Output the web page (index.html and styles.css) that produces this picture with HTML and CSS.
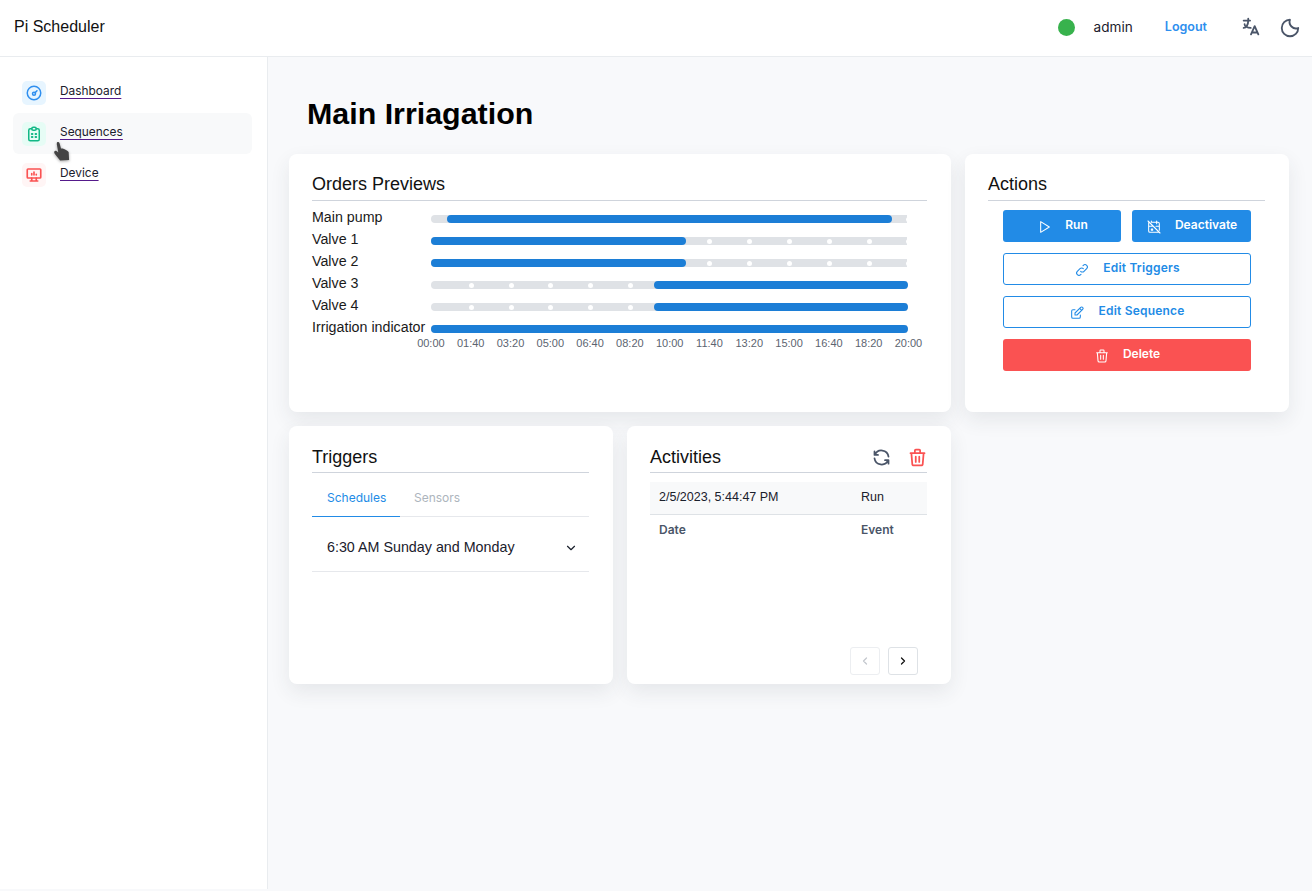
FILE: index.html
```html
<!DOCTYPE html>
<html lang="en">
<head>
<meta charset="utf-8">
<title>Pi Scheduler</title>
<link rel="stylesheet" href="styles.css">
</head>
<body>
<header class="topbar">
  <div class="brand">Pi Scheduler</div>
  <div class="top-right">
    <span class="status-dot"></span>
    <span class="user">admin</span>
    <a class="logout">Logout</a>
    <svg class="top-icon translate" viewBox="0 0 24 24" fill="none" stroke="#4a5568" stroke-width="2" stroke-linecap="round" stroke-linejoin="round"><path d="M4 5h7M9 3v2c0 4.418-2.239 8-5 8M5 9c0 2.144 2.952 3.908 6.700 4M12 20l4-9 4 9M19.100 18h-6.200"/></svg>
    <svg class="top-icon moon" viewBox="0 0 24 24" fill="none" stroke="#4a5568" stroke-width="2" stroke-linecap="round" stroke-linejoin="round"><path d="M12 3a9 9 0 1 0 9 9 7 7 0 0 1-9-9z"/></svg>
  </div>
</header>
<div class="shell">
  <nav class="sidebar">
    <a class="nav-item">
      <span class="nav-icon blue"><svg viewBox="0 0 24 24" fill="none" stroke="#2f8fef" stroke-width="2" stroke-linecap="round" stroke-linejoin="round"><circle cx="12" cy="12" r="9"/><circle cx="12" cy="13" r="2"/><path d="M13.500 11.500L16 9"/></svg></span>
      <span class="nav-label">Dashboard</span>
    </a>
    <a class="nav-item active">
      <span class="nav-icon green"><svg viewBox="0 0 24 24" fill="none" stroke="#12b886" stroke-width="2" stroke-linecap="round" stroke-linejoin="round"><path d="M9 5H7a2 2 0 0 0-2 2v12a2 2 0 0 0 2 2h10a2 2 0 0 0 2-2V7a2 2 0 0 0-2-2h-2"/><rect x="9" y="3" width="6" height="4" rx="2"/><path d="M9 12h1M14 12h1M9 16h1M14 16h1" stroke-width="2.400"/></svg></span>
      <span class="nav-label">Sequences</span>
    </a>
    <a class="nav-item">
      <span class="nav-icon red"><svg viewBox="0 0 24 24" fill="none" stroke="#fa5252" stroke-width="2.200" stroke-linecap="round" stroke-linejoin="round"><rect x="3" y="4" width="18" height="12" rx="1"/><path d="M7 20h10M9 16v4M15 16v4M9 12V10M12 12V8M15 12v-1"/></svg></span>
      <span class="nav-label">Device</span>
    </a>
    <svg class="cursor" viewBox="0 0 20 24"><path d="M5.500 1.500C6.500.5 8 1 8.300 2L10 8l2 0 2 1 3 1.500 1.500 1.500.5 9-10 .5-6-7.500c-1.500-2 0-4 2-3l2 1.500-1.700-9.500z" fill="#444"/></svg>
  </nav>
  <main class="content">
    <h1 class="page-title">Main Irriagation</h1>
    <div class="cards">
      <section class="card wide">
        <h2 class="card-title">Orders Previews</h2>
        <div class="chart">
          <div class="chart-row"><span class="chart-label">Main pump</span><div class="track"><i class="dot" style="left:477px"></i><i class="fill" style="left:16px;width:445px"></i></div></div>
          <div class="chart-row"><span class="chart-label">Valve 1</span><div class="track"><i class="fill" style="left:0;width:255px"></i><i class="dot" style="left:278px"></i><i class="dot" style="left:318px"></i><i class="dot" style="left:358px"></i><i class="dot" style="left:398px"></i><i class="dot" style="left:438px"></i><i class="dot" style="left:477px"></i></div></div>
          <div class="chart-row"><span class="chart-label">Valve 2</span><div class="track"><i class="fill" style="left:0;width:255px"></i><i class="dot" style="left:278px"></i><i class="dot" style="left:318px"></i><i class="dot" style="left:358px"></i><i class="dot" style="left:398px"></i><i class="dot" style="left:438px"></i><i class="dot" style="left:477px"></i></div></div>
          <div class="chart-row"><span class="chart-label">Valve 3</span><div class="track"><i class="dot" style="left:40px"></i><i class="dot" style="left:80px"></i><i class="dot" style="left:119px"></i><i class="dot" style="left:159px"></i><i class="dot" style="left:199px"></i><i class="fill" style="left:223px;width:254px"></i></div></div>
          <div class="chart-row"><span class="chart-label">Valve 4</span><div class="track"><i class="dot" style="left:40px"></i><i class="dot" style="left:80px"></i><i class="dot" style="left:119px"></i><i class="dot" style="left:159px"></i><i class="dot" style="left:199px"></i><i class="fill" style="left:223px;width:254px"></i></div></div>
          <div class="chart-row"><span class="chart-label">Irrigation indicator</span><div class="track"><i class="fill" style="left:0;width:477px"></i></div></div>
          <div class="axis">
            <span>00:00</span><span>01:40</span><span>03:20</span><span>05:00</span><span>06:40</span><span>08:20</span><span>10:00</span><span>11:40</span><span>13:20</span><span>15:00</span><span>16:40</span><span>18:20</span><span>20:00</span>
          </div>
        </div>
      </section>
      <section class="card">
        <h2 class="card-title">Actions</h2>
        <div class="actions">
          <div class="action-row">
            <button class="btn solid run"><svg viewBox="0 0 24 24" fill="none" stroke="currentColor" stroke-width="1.600" stroke-linecap="round" stroke-linejoin="round"><path d="M7 4v16l13-8z"/></svg><span>Run</span></button>
            <button class="btn solid deact"><svg viewBox="0 0 24 24" fill="none" stroke="currentColor" stroke-width="1.600" stroke-linecap="round" stroke-linejoin="round"><path d="M8 5h10a2 2 0 0 1 2 2v10M19.400 19.400A2 2 0 0 1 18 20H6a2 2 0 0 1-2-2V6c0-.5.200-1 .6-1.400M16 3v4M8 3v1M4 11h7M15 11h5M8 15h2v2H8zM3 3l18 18"/></svg><span>Deactivate</span></button>
          </div>
          <button class="btn outline"><svg viewBox="0 0 24 24" fill="none" stroke="currentColor" stroke-width="1.600" stroke-linecap="round" stroke-linejoin="round"><path d="M10 14a3.500 3.500 0 0 0 5 0l4-4a3.500 3.500 0 0 0-5-5l-.5.500"/><path d="M14 10a3.500 3.500 0 0 0-5 0l-4 4a3.500 3.500 0 0 0 5 5l.5-.5"/></svg><span>Edit Triggers</span></button>
          <button class="btn outline"><svg viewBox="0 0 24 24" fill="none" stroke="currentColor" stroke-width="1.600" stroke-linecap="round" stroke-linejoin="round"><path d="M9 7H6a2 2 0 0 0-2 2v9a2 2 0 0 0 2 2h9a2 2 0 0 0 2-2v-3"/><path d="M9 15h3l8.500-8.500a2.120 2.120 0 0 0-3-3L9 12v3zM16 5l3 3"/></svg><span>Edit Sequence</span></button>
          <button class="btn solid danger"><svg viewBox="0 0 24 24" fill="none" stroke="currentColor" stroke-width="1.600" stroke-linecap="round" stroke-linejoin="round"><path d="M4 7h16M10 11v6M14 11v6M5 7l1 12a2 2 0 0 0 2 2h8a2 2 0 0 0 2-2l1-12M9 7V4a1 1 0 0 1 1-1h4a1 1 0 0 1 1 1v3"/></svg><span>Delete</span></button>
        </div>
      </section>
      <section class="card">
        <h2 class="card-title lower">Triggers</h2>
        <div class="tabs">
          <span class="tab selected">Schedules</span>
          <span class="tab">Sensors</span>
        </div>
        <div class="accordion">
          <span>6:30 AM Sunday and Monday</span>
          <svg viewBox="0 0 24 24" fill="none" stroke="#1a202c" stroke-width="2" stroke-linecap="round" stroke-linejoin="round"><path d="M6 9l6 6 6-6"/></svg>
        </div>
      </section>
      <section class="card activity">
        <div class="card-title with-tools">
          <h2 class="lower">Activities</h2>
          <div class="tools">
            <svg viewBox="0 0 24 24" fill="none" stroke="#4a5568" stroke-width="2" stroke-linecap="round" stroke-linejoin="round"><path d="M20 11A8.100 8.100 0 0 0 4.500 9M4 5v4h4"/><path d="M4 13a8.100 8.100 0 0 0 15.500 2M20 19v-4h-4"/></svg>
            <svg viewBox="0 0 24 24" fill="none" stroke="#fa5252" stroke-width="2" stroke-linecap="round" stroke-linejoin="round"><path d="M4 7h16M10 11v6M14 11v6M5 7l1 12a2 2 0 0 0 2 2h8a2 2 0 0 0 2-2l1-12M9 7V4a1 1 0 0 1 1-1h4a1 1 0 0 1 1 1v3"/></svg>
          </div>
        </div>
        <div class="log-row body"><span class="col-date">2/5/2023, 5:44:47 PM</span><span>Run</span></div>
        <div class="log-row head"><span class="col-date">Date</span><span>Event</span></div>
        <div class="pager">
          <button class="page-btn off"><svg viewBox="0 0 24 24" fill="none" stroke="currentColor" stroke-width="2.500" stroke-linecap="round" stroke-linejoin="round"><path d="M15 6l-6 6 6 6"/></svg></button>
          <button class="page-btn"><svg viewBox="0 0 24 24" fill="none" stroke="currentColor" stroke-width="2.500" stroke-linecap="round" stroke-linejoin="round"><path d="M9 6l6 6-6 6"/></svg></button>
        </div>
      </section>
    </div>
  </main>
</div>
</body>
</html>
```

FILE: styles.css
```css
* { box-sizing: border-box; }
html, body { height: 100%; }
body {
  margin: 0;
  background: #f8f9fb;
  color: #1a202c;
  font-family: "Liberation Sans", Arial, sans-serif;
  display: flex;
  flex-direction: column;
  overflow: hidden;
}
.topbar {
  height: 57px;
  flex: none;
  background: #fff;
  border-bottom: 1px solid #e9ecef;
  display: flex;
  align-items: center;
  justify-content: space-between;
  padding: 0 22px 3px 14px;
}
.brand { font-size: 16px; color: #111; }
.top-right { display: flex; align-items: center; }
.status-dot { width: 17px; height: 17px; border-radius: 50%; background: #38b24d; margin: 1px 19px 0 0; }
.user { font-family: Inter, sans-serif; font-size: 13.600px; margin-right: 32px; }
.logout { font-family: Inter, sans-serif; font-weight: 600; font-size: 12.500px; color: #2e8fee; margin-right: 33px; }
.top-icon { width: 22px; height: 22px; display: block; }
.translate { margin-right: 17px; margin-top: 1px; }
.moon { margin-right: -11px; margin-top: 3px; }
.shell { flex: 1; display: flex; min-height: 0; }
.sidebar {
  position: relative;
  width: 268px;
  flex: none;
  height: 832px;
  background: #fff;
  border-right: 1px solid #e9ecef;
  padding: 15px 15px 0 13px;
}
.nav-item {
  height: 41px;
  display: flex;
  align-items: center;
  gap: 14px;
  padding-left: 9px;
  border-radius: 6px;
}
.nav-item.active { background: #f8f9fa; }
.nav-icon {
  width: 24px; height: 24px; border-radius: 5px;
  display: flex; align-items: center; justify-content: center;
}
.nav-icon svg { width: 18px; height: 18px; }
.nav-icon.blue { background: #e7f5ff; }
.nav-icon.green { background: #e6fcf5; }
.nav-icon.red { background: #fff5f5; }
.nav-label {
  font-family: Inter, sans-serif;
  font-size: 11.900px;
  color: #1a202c;
  margin-bottom: 4px;
  text-decoration: underline;
  text-decoration-color: #551a8b;
  text-underline-offset: 3px;
}
.cursor { position: absolute; left: 52px; top: 84px; width: 18px; height: 22px; filter: drop-shadow(0 1px 1.500px rgba(0, 0, 0, .35)); }
.content { flex: 1; padding: 0 23px 0 21px; min-width: 0; }
.page-title { margin: 38px 0 23px 18px; font-size: 30.400px; line-height: 36px; font-weight: 700; color: #000; }
.cards {
  display: grid;
  grid-template-columns: repeat(3, 324px);
  grid-auto-rows: 258px;
  gap: 14px;
}
.card {
  background: #fff;
  border-radius: 8px;
  box-shadow: 0 8px 20px rgba(40, 50, 70, .09);
  padding: 18px 24px 0 23px;
}
.card.wide { grid-column: span 2; }
.card-title {
  margin: 0;
  height: 29px;
  font-size: 18px;
  line-height: 24px;
  font-weight: 400;
  color: #111;
  border-bottom: 1px solid #cfd4dc;
}
.lower { padding-top: 1px; }
.chart { padding-top: 6px; }
.chart-row { display: flex; height: 22px; align-items: center; }
.chart-label { width: 119px; flex: none; font-size: 14.250px; color: #1a1a1a; white-space: nowrap; position: relative; top: -1px; }
.track { position: relative; width: 476px; height: 8px; top: 1px; background: #dfe2e6; border-radius: 4px 0 0 4px; }
.fill { position: absolute; top: 0; height: 8px; background: #1c7ed6; border-radius: 4px; }
.dot { position: absolute; top: 1.500px; width: 5px; height: 5px; margin-left: -2.500px; border-radius: 50%; background: #fff; }
.axis {
  display: grid;
  grid-template-columns: repeat(13, 39.800px);
  margin-left: 99px;
  font-size: 11px;
  line-height: 13px;
  color: #5c6470;
  text-align: center;
  height: 14px;
  margin-top: -1px;
  position: relative;
  top: -1px;
}
.actions { display: flex; flex-direction: column; gap: 11px; padding: 9px 14px 0 15px; }
.action-row { display: flex; gap: 11px; }
.btn {
  height: 32px;
  border-radius: 3px;
  font-family: Inter, sans-serif;
  font-size: 12px;
  font-weight: 600;
  display: flex;
  align-items: center;
  justify-content: center;
  gap: 13px;
  padding: 0 0 3px;
}
.btn svg { width: 16px; height: 16px; position: relative; top: 2px; }
.btn.solid { border: 0; color: #fff; background: #228be6; }
.btn.outline { background: #fff; border: 1px solid #228be6; color: #228be6; width: 100%; letter-spacing: .2px; }
.btn.danger { background: #fa5252; width: 100%; }
.run { width: 118px; }
.deact { width: 119px; }
.tabs { display: flex; height: 44px; border-bottom: 1px solid #e6e8ec; font-family: Inter, sans-serif; font-size: 12px; }
.tab { padding: 17px 14px 0 14px; width: auto; color: #adb5bd; margin-bottom: -1px; }
.tab.selected { color: #228be6; width: 88px; border-bottom: 1px solid #228be6; padding-left: 15px; }
.accordion {
  height: 55px;
  border-bottom: 1px solid #e6e8ec;
  display: flex;
  align-items: center;
  justify-content: space-between;
  font-size: 14.300px;
  padding: 6px 11px 0 15px;
}
.accordion svg { width: 14px; height: 14px; margin-top: 2px; }
.activity { position: relative; }
.with-tools { display: flex; justify-content: space-between; align-items: flex-start; }
.with-tools h2 { margin: 0; font: inherit; }
.tools { display: flex; gap: 15px; padding-top: 3px; margin-right: -1px; }
.tools svg { width: 21px; height: 21px; display: block; }
.log-row { display: flex; align-items: center; height: 33px; padding: 0 0 3px 9px; font-size: 12.500px; }
.col-date { width: 202px; }
.log-row.body { margin-top: 9px; background: #f8f9fa; border-bottom: 1px solid #dee2e6; }
.log-row.head { font-family: Inter, sans-serif; font-size: 12px; font-weight: 600; color: #4a5568; padding-bottom: 5px; }
.pager { position: absolute; right: 33px; bottom: 9px; display: flex; gap: 8px; }
.page-btn {
  width: 30px; height: 28px; padding: 0;
  background: #fff;
  border: 1px solid #dee2e6;
  border-radius: 3px;
  color: #111;
  display: flex; align-items: center; justify-content: center;
}
.page-btn svg { width: 12px; height: 12px; }
.page-btn.off { color: #c4c8ce; border-color: #eceef1; }
```
